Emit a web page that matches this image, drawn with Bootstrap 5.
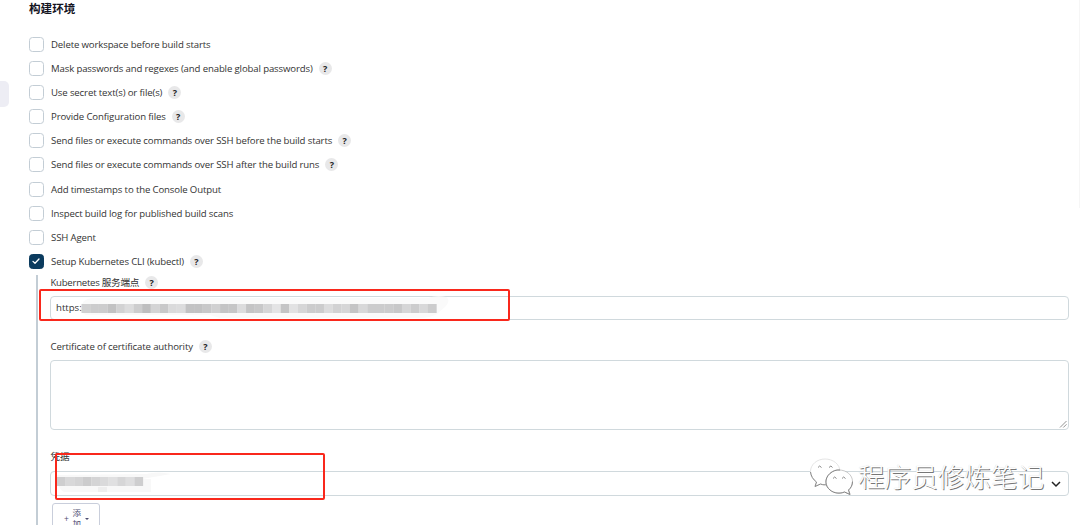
<!DOCTYPE html>
<html lang="zh-CN">
<head>
<meta charset="utf-8">
<title>构建环境</title>
<link href="https://cdn.jsdelivr.net/npm/bootstrap@5.3.0/dist/css/bootstrap.min.css" rel="stylesheet">
<style>
body{font-family:"Open Sans","Noto Sans CJK SC",sans-serif;font-size:9.6px;line-height:14px;color:#333;background:#fff;height:525px;overflow:hidden}
.page{padding:0 11px 0 29px;height:525px}
.title{font-size:11.6px;line-height:16px;font-weight:700;color:#14141f;height:32.4px;font-family:"Noto Sans CJK SC",sans-serif}
.opt{height:24.1px}
.txt{white-space:nowrap;letter-spacing:-.13px;padding-top:1px}
.box{width:15px;height:15px;border:1.5px solid #c3cdd5;border-radius:3.5px;margin-right:7px;flex:none;background:#fff}
.box.on{background:#0b3b5e;border-color:#0b3b5e;display:flex}
.help{width:13px;height:13px;border-radius:50%;background:#e8e8e9;color:#222;font-weight:700;font-size:9px;line-height:13px;text-align:center;margin-left:6px;flex:none}
.nest{margin:2px 0 0 7px;border-left:2px solid #c3cdd5;padding-left:12px;height:260px}
.lab{height:14px;padding-left:.5px}
.lab-k .txt{letter-spacing:-.26px}
.lab-c{margin-top:19px}
.lab-p{margin-top:19px}
.field{border:1px solid #d0d9dd;border-radius:4px;background:#fff}
.f-in{height:24px;margin-top:7px;padding-left:5px}
.f-area{height:70px;margin-top:7px;padding:0 1px 1px 0}
.f-sel{height:25px;margin-top:8px;padding:0 7px 0 6px}
.add{width:48px;height:32px;margin:7px 0 0 2px;border:1.5px solid #c9cedb;border-radius:3px;color:#4d4d70;font-size:8.5px;line-height:10.5px;padding:4px 10px 0 11px}
.add .word{width:9px}
.add .side{line-height:21px}
.caret{border:2px solid transparent;border-top-color:#4d4d70;border-bottom:0;margin-top:10px}
.frame{border:2px solid #f9281c;border-radius:2px}
.fr-a{left:39px;top:289px;width:471px;height:32px}
.fr-b{left:55px;top:453px;width:270px;height:47px}
.tab{left:-8px;top:81px;width:17px;height:26px;border-radius:5px;background:#ededf4}
.edge{right:0;top:0;width:1px;height:208px;background:#f6f6f6}
.mosaic-a{left:80px;top:296px}
.mosaic-b{left:56px;top:470px}
.wm{left:807px;top:455px}
.wm-t{font:300 26.6px/40px "Noto Sans CJK SC",sans-serif;color:#fff;text-shadow:1px 1px .6px #777,0 0 1px #ccc;white-space:nowrap;margin:1px 0 0 3px}
</style>
<script src="https://cdn.jsdelivr.net/npm/bootstrap@5.3.0/dist/js/bootstrap.bundle.min.js"></script>
</head>
<body class="position-relative">
<main class="page">
<h1 class="title mb-0 pt-0">构建环境</h1>
<div class="opt d-flex align-items-center"><span class="box"></span><span class="txt">Delete workspace before build starts</span></div>
<div class="opt d-flex align-items-center"><span class="box"></span><span class="txt">Mask passwords and regexes (and enable global passwords)</span><span class="help">?</span></div>
<div class="opt d-flex align-items-center"><span class="box"></span><span class="txt">Use secret text(s) or file(s)</span><span class="help">?</span></div>
<div class="opt d-flex align-items-center"><span class="box"></span><span class="txt">Provide Configuration files</span><span class="help">?</span></div>
<div class="opt d-flex align-items-center"><span class="box"></span><span class="txt">Send files or execute commands over SSH before the build starts</span><span class="help">?</span></div>
<div class="opt d-flex align-items-center"><span class="box"></span><span class="txt">Send files or execute commands over SSH after the build runs</span><span class="help">?</span></div>
<div class="opt d-flex align-items-center"><span class="box"></span><span class="txt">Add timestamps to the Console Output</span></div>
<div class="opt d-flex align-items-center"><span class="box"></span><span class="txt">Inspect build log for published build scans</span></div>
<div class="opt d-flex align-items-center"><span class="box"></span><span class="txt">SSH Agent</span></div>
<div class="opt d-flex align-items-center"><span class="box on"><svg width="12" height="12" viewBox="0 0 12 12" fill="none" stroke="#fff" stroke-width="1.3" stroke-linecap="round" stroke-linejoin="round"><path d="M3 6.4 5 8.3 9 4"/></svg></span><span class="txt">Setup Kubernetes CLI (kubectl)</span><span class="help">?</span></div>
<section class="nest">
<div class="lab lab-k d-flex align-items-center"><span class="txt">Kubernetes 服务端点</span><span class="help">?</span></div>
<div class="field f-in d-flex align-items-center"><span>https:/</span></div>
<div class="lab lab-c d-flex align-items-center"><span class="txt">Certificate of certificate authority</span><span class="help">?</span></div>
<div class="field f-area d-flex align-items-end justify-content-end"><svg width="8" height="8" viewBox="0 0 8 8" stroke="#777" stroke-width=".8"><path d="M1 7.5 7.5 1M4.3 7.5 7.5 4.3"/></svg></div>
<div class="lab lab-p d-flex align-items-center"><span class="txt">凭据</span></div>
<div class="field f-sel d-flex align-items-center justify-content-between"><span></span><svg width="10" height="8" viewBox="0 0 10 8" fill="none" stroke="#222" stroke-width="1.5"><path d="M1 2 5 6 9 2"/></svg></div>
<div class="add d-flex justify-content-between"><span class="side">+</span><span class="word"><span class="d-block">添</span><span class="d-block">加</span></span><span class="side"><i class="caret d-block"></i></span></div>
</section>
</main>
<div class="tab position-absolute"></div>
<div class="edge position-absolute"></div>
<svg class="mosaic-a position-absolute" width="372" height="23" viewBox="0 0 372 23">
<path fill="#fafafa" d="M2 8Q4 3 12 2H348Q356-1 366 1Q371 4 366 10L357 18Q350 22 340 22H140L130 19H6Q1 18 2 8Z"/>
<g id="cells-a"></g>
</svg>
<svg class="mosaic-b position-absolute" width="120" height="24" viewBox="0 0 120 24">
<path fill="#f8f8f8" d="M1 5 90 4Q102 1 115 4L86 9H95V22H8Q2 20 1 5Z"/><path fill="#eee" d="M42 17h9v5h-9z"/>
<g id="cells-b"></g>
</svg>
<div class="frame fr-a position-absolute"></div>
<div class="frame fr-b position-absolute"></div>
<div class="wm position-absolute d-flex">
<svg width="48" height="42" viewBox="0 0 48 42" fill="#fff" stroke-linejoin="round">
<path stroke="#ddd" stroke-width=".8" d="M18 4C10 4 3.500 9.500 3.500 16.500C3.500 21 6 24.500 9.500 27L8 31.500L13.500 29C16 30 19 30 21 29.500C28 29 33 23 33 17C33 9 26 4 18 4Z"/>
<path fill="none" stroke="#888" d="M3.500 17C4 21 6 24.500 9.500 27L8 31.500L13.500 29C16 30 18 30 20 29.500"/>
<path stroke="#bbb" stroke-width=".8" d="M32 15C24.500 15 19 20 19 26.500S24.500 38 32 38Q35 38 37.500 37L43 39.500L41.500 35C44 33 45.500 30 45.500 26.500C45.500 20 39.500 15 32 15Z"/>
<path fill="none" stroke="#888" d="M33 15C29 14.500 26 16 23 18.500C17 24 18 31 23 35C27 38.500 33 39 37.500 37L43 39.500L41.500 35C44 33 45.500 30 45.500 26.500"/>
<path fill="none" stroke="#888" d="M11 12.500q1.500-3 3.500 0M22 12.500q2-3 3.500 0M26 23.500q1.500-3 3.500 0M35 23.500q1.500-3 3.500 0"/>
</svg>
<span class="wm-t">程序员修炼笔记</span>
</div>
<script>
const cells = (id, x, y, step, h, shades) => {
  document.getElementById(id).innerHTML = shades.map((c, i) =>
    `<rect x="${x + i * step}" y="${y}" width="${step + .1}" height="${h}" fill="rgb(${c},${c},${c + 1})"/>`).join('');
};
cells('cells-a', 1.5, 8, 8.66, 9, [208,204,204,194,210,220,205,190,212,200,218,220,194,194,200,208,196,198,220,196,200,214,228,196,226,214,204,204,220,210,214,196,216,204,204,204,200,214,204,216,204]);
cells('cells-b', 1, 7, 8.6, 9, [206,216,212,204,212,218,224,214,222,206]);
</script>
</body>
</html>
